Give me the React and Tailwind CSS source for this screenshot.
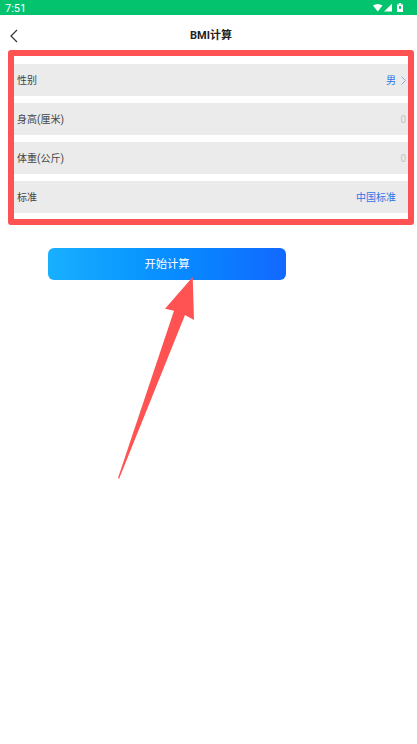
import React from 'react';

const rows = [
  { label: '性别', value: '男', valueClass: 'text-[#2f74e8]', arrow: true },
  { label: '身高(厘米)', value: '0', valueClass: 'text-[#c4c4c4]' },
  { label: '体重(公斤)', value: '0', valueClass: 'text-[#c4c4c4]' },
  { label: '标准', value: '中国标准', valueClass: 'text-[#2f74e8] pr-[10px]' },
];

function StatusIcons() {
  return (
    <svg width="31" height="10" viewBox="0 0 31 10" fill="white">
      <path d="M0 2.4 Q4.5 -0.6 9.5 2.4 L4.75 8.5 Z" />
      <path d="M11 8.5 L19 0.8 V8.5 Z" />
      <rect x="24" y="1.4" width="6" height="7.6" />
      <rect x="25.8" y="0" width="2.4" height="1.6" />
      <rect x="26" y="3.2" width="2" height="2.6" fill="#04c36f" />
    </svg>
  );
}

export default function App() {
  return (
    <div className="relative w-[417px] h-[744px] bg-white overflow-hidden font-['Roboto','Noto_Sans_CJK_SC',sans-serif]">
      <div className="h-[15px] bg-[#04c36f] flex items-center justify-between pl-[5px] pr-[13px]">
        <span className="text-[11px] leading-none text-white pt-[1px]">7:51</span>
        <StatusIcons />
      </div>

      <div className="relative h-[35px] flex items-center justify-center pl-[5px] pt-[8px]">
        <svg className="absolute left-[9px] top-[14px]" width="10" height="14" viewBox="0 0 10 14" fill="none" stroke="#333333" strokeWidth="1.2">
          <path d="M8 1 L2 7 L8 13" />
        </svg>
        <span className="text-[11px] font-bold text-[#222222]">BMI计算</span>
      </div>

      <div className="mx-[8px] w-[406px] border-[6px] border-[#ff5353] rounded-[3px] pt-[8px] pb-[6px] flex flex-col gap-[7px]">
        {rows.map((row) => (
          <div key={row.label} className="h-[32px] bg-[#ebebeb] flex items-center justify-between pl-[3px] pr-[2px]">
            <span className="text-[10px] text-[#444444]">{row.label}</span>
            <div className="flex items-center gap-[5px]">
              <span className={`text-[10px] ${row.valueClass}`}>{row.value}</span>
              {row.arrow && (
                <svg width="5" height="9" viewBox="0 0 5 9" fill="none" stroke="#8fa9d6" strokeWidth="1">
                  <path d="M0.5 0.5 L4.5 4.5 L0.5 8.5" />
                </svg>
              )}
            </div>
          </div>
        ))}
      </div>

      <button className="block mt-[23px] ml-[48px] w-[238px] h-[32px] pt-[2px] rounded-[6px] bg-gradient-to-r from-[#19b0ff] to-[#1368ff] text-[11.3px] text-white">
        开始计算
      </button>

      <svg className="absolute left-0 top-0 pointer-events-none" width="417" height="744" viewBox="0 0 417 744">
        <path d="M192.7 277 L194 320 L185 315 L119 479 L118 478 L174 310.7 L165 308.7 Z" fill="#ff5353" />
      </svg>
    </div>
  );
}
